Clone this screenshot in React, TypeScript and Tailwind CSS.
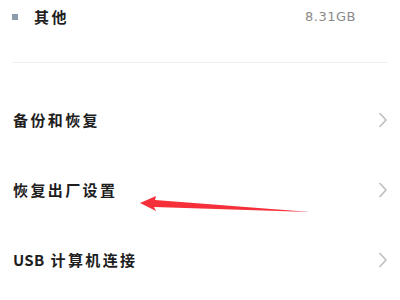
import React from "react";

const rows = [
  { prefix: "", label: "备份和恢复" },
  { prefix: "", label: "恢复出厂设置" },
  { prefix: "USB", label: "计算机连接" },
];

const Chevron = () => (
  <svg width="10" height="16" viewBox="0 0 10 16" fill="none" className="shrink-0">
    <path d="M2 1.5 L8 8 L2 14.5" stroke="#bdbdbd" strokeWidth="1.6" strokeLinecap="round" strokeLinejoin="round" />
  </svg>
);

export default function App() {
  return (
    <div
      className="relative w-[400px] h-[300px] overflow-hidden bg-white"
      style={{ fontFamily: '"Noto Sans CJK SC", "Noto Sans", sans-serif' }}
    >
      <div className="px-3">
        <div className="flex items-center justify-between h-[34px]">
          <div className="flex items-center">
            <div className="w-[6px] h-[6px] bg-[#8e9cae]" />
            <span className="ml-4 text-[15px] font-bold tracking-[2.5px] text-[#1e1e1e]">其他</span>
          </div>
          <span
            className="mr-[32px] text-[13px] tracking-[0.5px] text-[#8a8a8a]"
            style={{ fontFamily: '"DejaVu Sans", sans-serif' }}
          >
            8.31GB
          </span>
        </div>
        <div className="mt-[28px] h-px bg-[#f0f0f0]" />
      </div>

      <div className="pt-[22px] pl-[13px] pr-[12px]">
        {rows.map((row) => (
          <div key={row.label} className="flex items-center justify-between h-[70px]">
            <span className="flex items-center text-[15px] font-bold text-[#1e1e1e]">
              {row.prefix && <span className="mr-[6px] tracking-[0.3px]">{row.prefix}</span>}
              <span className="tracking-[2.4px]">{row.label}</span>
            </span>
            <Chevron />
          </div>
        ))}
      </div>

      <svg className="absolute left-0 top-0" width="400" height="300" viewBox="0 0 400 300">
        <polygon points="140,203 156,196 155,200 310,212 154,207 156,211" fill="#f5303a" />
      </svg>
    </div>
  );
}
